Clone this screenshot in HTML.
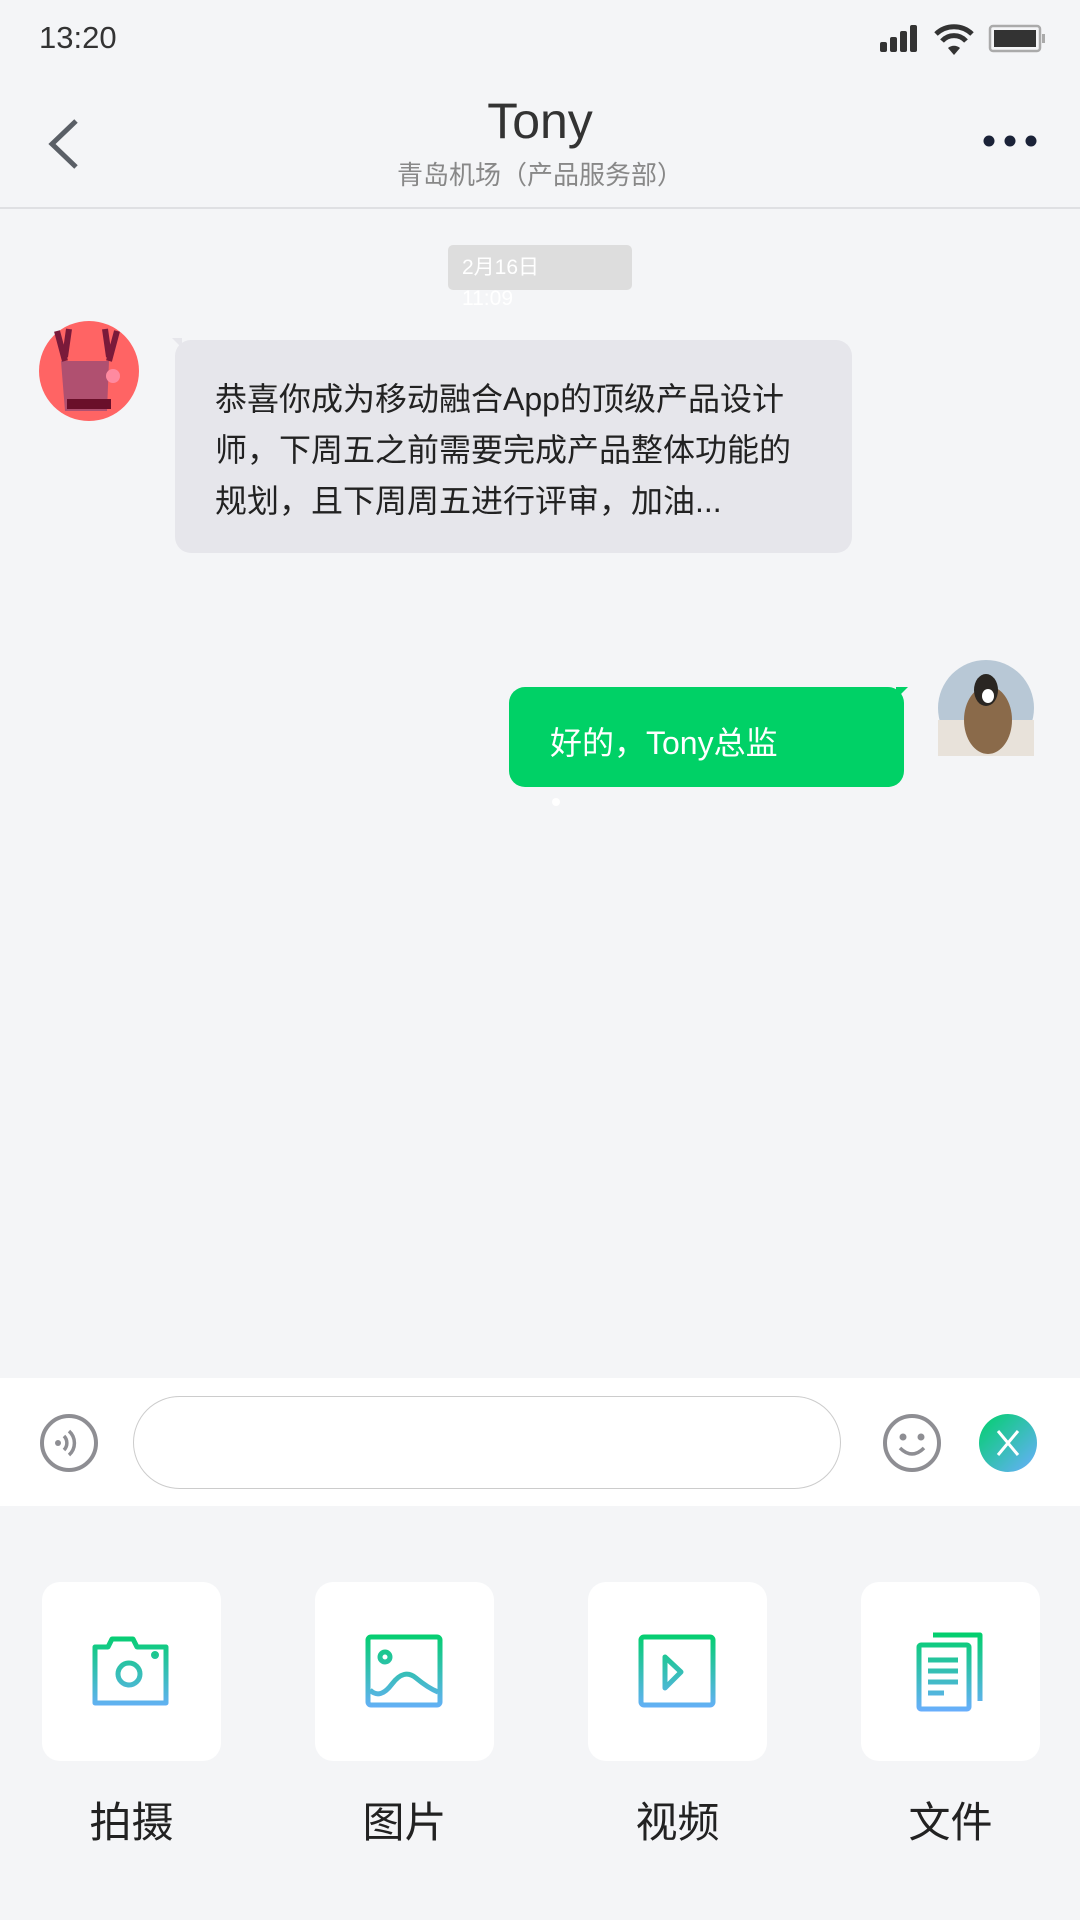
<!DOCTYPE html>
<html><head><meta charset="utf-8"><style>
*{margin:0;padding:0;box-sizing:border-box}
body{width:1080px;height:1920px;background:#f4f5f7;font-family:"Liberation Sans","Noto Sans CJK SC",sans-serif;position:relative;overflow:hidden}
.a{position:absolute}
.tile{position:absolute;top:1582px;width:179px;height:179px;background:#fff;border-radius:18px}
.lbl{position:absolute;top:1789px;width:179px;text-align:center;font-size:42px;color:#222}
</style></head><body>
<div class="a" style="left:39px;top:20px;font-size:31px;color:#333">13:20</div>
<svg class="a" style="left:878px;top:22px" width="170" height="34" viewBox="0 0 170 34">
<rect x="2" y="20" width="7" height="10" rx="2" fill="#333"/><rect x="12" y="15" width="7" height="15" rx="2" fill="#333"/><rect x="22" y="9" width="7" height="21" rx="2" fill="#333"/><rect x="32" y="3" width="7" height="27" rx="2" fill="#333"/>
<path d="M58 12a26 26 0 0 1 36 0" stroke="#333" stroke-width="5" fill="none"/><path d="M64 19a16 16 0 0 1 24 0" stroke="#333" stroke-width="5" fill="none"/><path d="M70 26l6 7 6-7a9 9 0 0 0-12 0z" fill="#333"/>
<rect x="112" y="4" width="50" height="25" rx="3" fill="none" stroke="#aaa" stroke-width="2.5"/><rect x="116" y="8" width="42" height="17" fill="#333"/><rect x="164" y="12" width="3" height="9" fill="#aaa"/></svg>
<svg class="a" style="left:44px;top:118px" width="36" height="52"><path d="M32 3L8 26l24 23" stroke="#5a5f66" stroke-width="5" fill="none"/></svg>
<div class="a" style="left:0;width:1080px;top:92px;text-align:center;font-size:50px;color:#333">Tony</div>
<div class="a" style="left:0;width:1080px;top:155px;text-align:center;font-size:26px;color:#888">青岛机场（产品服务部）</div>
<svg class="a" style="left:980px;top:132px" width="60" height="20"><circle cx="9" cy="9" r="5.5" fill="#1a2238"/><circle cx="30" cy="9" r="5.5" fill="#1a2238"/><circle cx="51" cy="9" r="5.5" fill="#1a2238"/></svg>
<div class="a" style="left:0;top:207px;width:1080px;height:2px;background:#dfe0e3"></div>
<div class="a" style="left:448px;top:245px;width:184px;height:45px;background:#dddddd;border-radius:5px"></div>
<div class="a" style="left:462px;top:252px;font-size:21px;color:#fff;line-height:31px">2月16日<br>11:09</div>
<svg class="a" style="left:39px;top:321px" width="100" height="100"><circle cx="50" cy="50" r="50" fill="#ff6464"/><path d="M22 40l4 50h42l2-50z" fill="#b05070"/><path d="M18 10l8 30M30 8l-4 28M78 10l-8 30M66 8l4 28" stroke="#7a1a3a" stroke-width="6"/><rect x="28" y="78" width="44" height="10" fill="#6a0f2a"/><circle cx="74" cy="55" r="7" fill="#ff8aa0"/></svg>
<div class="a" style="left:175px;top:340px;width:677px;height:213px;background:#e6e6eb;border-radius:16px"></div>
<div class="a" style="left:172px;top:338px;width:0;height:0;border-top:10px solid #e6e6eb;border-left:10px solid transparent"></div>
<div class="a" style="left:215px;top:374px;width:605px;font-size:32px;line-height:51px;color:#222">恭喜你成为移动融合App的顶级产品设计师，下周五之前需要完成产品整体功能的规划，且下周周五进行评审，加油...</div>
<svg class="a" style="left:938px;top:660px" width="96" height="96"><circle cx="48" cy="48" r="48" fill="#b8c8d6"/><path d="M0 60h96v36H0z" fill="#e8e2da"/><ellipse cx="50" cy="60" rx="24" ry="34" fill="#8a6a4a"/><ellipse cx="48" cy="30" rx="12" ry="16" fill="#2a2622"/><ellipse cx="50" cy="36" rx="6" ry="7" fill="#fff"/></svg>
<div class="a" style="left:509px;top:687px;width:395px;height:100px;background:#00d166;border-radius:16px"></div>
<div class="a" style="left:896px;top:687px;border-top:12px solid #00d166;border-right:12px solid transparent"></div>
<div class="a" style="left:550px;top:718px;font-size:32px;color:#fff">好的，Tony总监</div>
<div class="a" style="left:552px;top:798px;width:8px;height:8px;border-radius:4px;background:#fff"></div>
<div class="a" style="left:0;top:1378px;width:1080px;height:128px;background:#fff"></div>
<div class="a" style="left:133px;top:1396px;width:708px;height:93px;border:1.5px solid #ccc;border-radius:47px"></div>
<svg class="a" style="left:38px;top:1412px" width="62" height="62"><circle cx="31" cy="31" r="27" stroke="#8e8e93" stroke-width="4" fill="none"/><circle cx="20" cy="31" r="3" fill="#8e8e93"/><path d="M26 24a10 10 0 0 1 0 14M31 19a16 16 0 0 1 0 24" stroke="#8e8e93" stroke-width="3.5" fill="none"/></svg>
<svg class="a" style="left:881px;top:1412px" width="62" height="62"><circle cx="31" cy="31" r="27" stroke="#8e8e93" stroke-width="4" fill="none"/><circle cx="22" cy="25" r="3.5" fill="#8e8e93"/><circle cx="40" cy="25" r="3.5" fill="#8e8e93"/><path d="M19 36q12 12 24 0" stroke="#8e8e93" stroke-width="3.5" fill="none"/></svg>
<svg class="a" style="left:979px;top:1414px" width="58" height="58"><defs><linearGradient id="g" x1="0" y1="0" x2="1" y2="1"><stop offset="0" stop-color="#00d06a"/><stop offset="1" stop-color="#6aaeff"/></linearGradient></defs><circle cx="29" cy="29" r="29" fill="url(#g)"/><path d="M19 17l20 24M39 17L19 41" stroke="#fff" stroke-width="3"/></svg>
<div class="tile" style="left:42px"></div><div class="tile" style="left:315px"></div><div class="tile" style="left:588px"></div><div class="tile" style="left:861px"></div>
<svg class="a" style="left:0;top:1620px" width="1080" height="110" fill="none" stroke-width="5" stroke-linejoin="round">
<defs><linearGradient id="g3" gradientUnits="userSpaceOnUse" x1="0" y1="12" x2="0" y2="92"><stop offset="0" stop-color="#00d06a"/><stop offset="1" stop-color="#6aaeff"/></linearGradient></defs>
<g stroke="url(#g3)">
<path d="M95 27h13l4-8h21l4 8h29v56H95z"/><circle cx="129" cy="54" r="11"/><circle cx="155" cy="35" r="1.5" fill="#1ac87a"/>
<rect x="368" y="17" width="72" height="68" rx="3"/><circle cx="385" cy="37" r="5"/><path d="M370 70q10 10 22-6t24-6 22 14"/>
<rect x="641" y="17" width="72" height="68" rx="3"/><path d="M665 37v31l16-16z"/>
<path d="M933 15h47v66"/><rect x="919" y="25" width="50" height="64" rx="2"/><path d="M928 40h30M928 51h30M928 62h30M928 73h16"/></g></svg>
<div class="lbl" style="left:42px">拍摄</div><div class="lbl" style="left:315px">图片</div><div class="lbl" style="left:588px">视频</div><div class="lbl" style="left:861px">文件</div>
</body></html>
